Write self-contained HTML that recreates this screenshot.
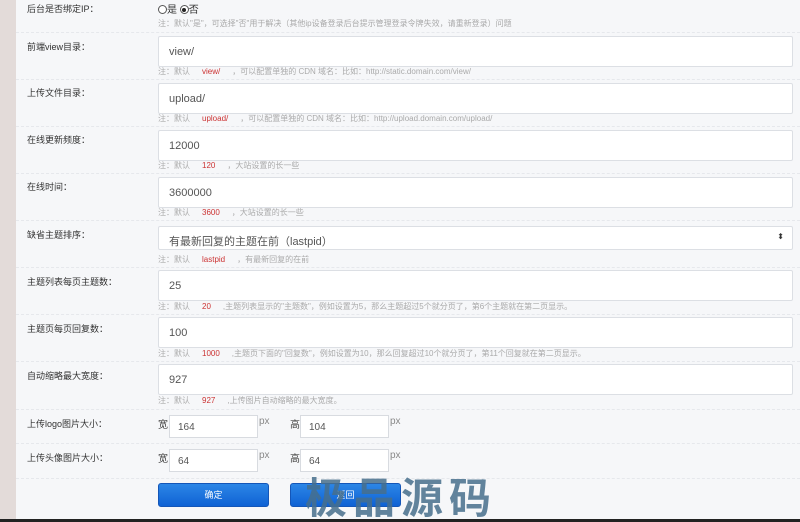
<!DOCTYPE html>
<html><head><meta charset="utf-8"><style>
body{margin:0;width:800px;height:522px;overflow:hidden;background:#f6f7f9;font-family:"Liberation Sans","Noto Sans CJK SC",sans-serif;position:relative}
.side{position:absolute;left:0;top:0;width:16px;height:522px;background:#e3dbd9}
.a{position:absolute}
.lab{position:absolute;left:27px;font-size:9px;color:#333}
.sep{position:absolute;left:16px;right:0;border-top:1px dashed #e6e8ec}
.inp{position:absolute;left:158px;width:635px;height:31px;background:#fff;border:1px solid #dcdfe4;border-radius:2px;box-sizing:border-box;font-size:11px;color:#555;padding:9px 0 0 10px}
.hint{position:absolute;left:158px;font-size:8px;color:#aaa;white-space:nowrap}
.hint b{font-weight:normal;color:#c33;margin:0 12px}
.sm{position:absolute;width:89px;height:23px;background:#fff;border:1px solid #d8dbe0;box-sizing:border-box;font-size:10px;color:#555;padding:6px 0 0 8px}
.t{position:absolute;font-size:10px;color:#444}
.btn{position:absolute;top:483px;width:111px;height:24px;border-radius:3px;background:linear-gradient(#2c86e6,#0f62d4);border:1px solid #1456b8;box-sizing:border-box;color:#fff;font-size:9px;text-align:center;line-height:22px}
.rd{display:inline-block;width:9px;height:9px;border:1px solid #555;border-radius:50%;box-sizing:border-box;vertical-align:-1px;position:relative;background:#fff}
.rd.on::after{content:"";position:absolute;left:1.5px;top:1.5px;width:4px;height:4px;border-radius:50%;background:#222}
</style></head><body>
<div class="side"></div>
<div class="lab" style="top:2px">后台是否绑定IP：</div>
<div class="a" style="left:158px;top:1px;font-size:10px;color:#333"><span class="rd"></span>是 <span class="rd on"></span>否</div>
<div class="hint" style="top:18px">注：默认"是"，可选择"否"用于解决（其他ip设备登录后台提示管理登录令牌失效，请重新登录）问题</div>
<div class="sep" style="top:32px"></div>
<div class="lab" style="top:40px">前端view目录：</div>
<div class="inp" style="top:36px">view/</div>
<div class="hint" style="top:66px">注：默认<b>view/</b>，可以配置单独的 CDN 域名：比如：http://static.domain.com/view/</div>
<div class="sep" style="top:79px"></div>
<div class="lab" style="top:86px">上传文件目录：</div>
<div class="inp" style="top:83px">upload/</div>
<div class="hint" style="top:113px">注：默认<b>upload/</b>，可以配置单独的 CDN 域名：比如：http://upload.domain.com/upload/</div>
<div class="sep" style="top:126px"></div>
<div class="lab" style="top:133px">在线更新频度：</div>
<div class="inp" style="top:130px">12000</div>
<div class="hint" style="top:160px">注：默认<b>120</b>，大站设置的长一些</div>
<div class="sep" style="top:173px"></div>
<div class="lab" style="top:180px">在线时间：</div>
<div class="inp" style="top:177px">3600000</div>
<div class="hint" style="top:207px">注：默认<b>3600</b>，大站设置的长一些</div>
<div class="sep" style="top:220px"></div>
<div class="lab" style="top:228px">缺省主题排序：</div>
<div class="inp" style="top:226px;height:24px;padding-top:6px">有最新回复的主题在前（lastpid）<span style="position:absolute;right:8px;top:5px;font-size:8px;color:#333">⬍</span></div>
<div class="hint" style="top:254px">注：默认<b>lastpid</b>，有最新回复的在前</div>
<div class="sep" style="top:267px"></div>
<div class="lab" style="top:275px">主题列表每页主题数：</div>
<div class="inp" style="top:270px">25</div>
<div class="hint" style="top:301px">注：默认<b>20</b>,主题列表显示的"主题数"，例如设置为5，那么主题超过5个就分页了，第6个主题就在第二页显示。</div>
<div class="sep" style="top:314px"></div>
<div class="lab" style="top:322px">主题页每页回复数：</div>
<div class="inp" style="top:317px">100</div>
<div class="hint" style="top:348px">注：默认<b>1000</b>,主题页下面的"回复数"，例如设置为10，那么回复超过10个就分页了，第11个回复就在第二页显示。</div>
<div class="sep" style="top:361px"></div>
<div class="lab" style="top:369px">自动缩略最大宽度：</div>
<div class="inp" style="top:364px">927</div>
<div class="hint" style="top:395px">注：默认<b>927</b>,上传图片自动缩略的最大宽度。</div>
<div class="sep" style="top:409px"></div>
<div class="lab" style="top:417px">上传logo图片大小：</div>
<div class="t" style="left:158px;top:416px">宽</div><div class="sm" style="left:169px;top:415px">164</div><div class="t" style="left:259px;top:416px;color:#888">px</div>
<div class="t" style="left:290px;top:416px">高</div><div class="sm" style="left:300px;top:415px">104</div><div class="t" style="left:390px;top:416px;color:#888">px</div>
<div class="sep" style="top:443px"></div>
<div class="lab" style="top:451px">上传头像图片大小：</div>
<div class="t" style="left:158px;top:450px">宽</div><div class="sm" style="left:169px;top:449px">64</div><div class="t" style="left:259px;top:450px;color:#888">px</div>
<div class="t" style="left:290px;top:450px">高</div><div class="sm" style="left:300px;top:449px">64</div><div class="t" style="left:390px;top:450px;color:#888">px</div>
<div class="sep" style="top:478px"></div>
<div class="btn" style="left:158px">确定</div>
<div class="btn" style="left:290px">返回</div>
<div class="a" style="left:305px;top:476px;font-size:42px;font-weight:bold;color:rgba(70,110,140,0.85);letter-spacing:6px;line-height:46px">极品源码</div>
<div class="a" style="left:0;top:519px;width:800px;height:3px;background:#222"></div>
</body></html>
